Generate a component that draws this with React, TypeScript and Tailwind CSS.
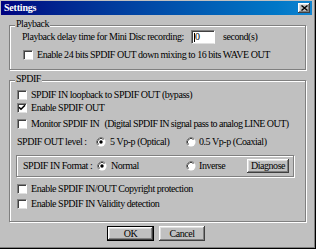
import React from "react";

const txt = "font-['Liberation_Serif',serif] text-[10px] leading-[12px] tracking-[-0.45px] text-black whitespace-nowrap";

function Check({ checked = false }: { checked?: boolean }) {
  return (
    <span className="w-[10px] h-[10px] shrink-0 bg-white border border-t-[#808080] border-l-[#808080] border-r-white border-b-[#dfdfdf] shadow-[inset_1px_1px_0_#404040] flex items-center justify-center">
      {checked && (
        <svg width="8" height="8" viewBox="0 0 8 8">
          <path d="M1 3.2 L3 5.2 L7 1.2" stroke="#000" strokeWidth="1.6" fill="none" />
        </svg>
      )}
    </span>
  );
}

function Radio({ checked = false }: { checked?: boolean }) {
  return (
    <svg width="10" height="10" viewBox="0 0 10 10" className="shrink-0">
      <circle cx="5" cy="5" r="4.5" fill="#fff" />
      <path d="M1.82 8.18 A4.5 4.5 0 0 1 8.18 1.82" stroke="#808080" fill="none" />
      <path d="M2.5 7.5 A3.5 3.5 0 0 1 7.5 2.5" stroke="#404040" fill="none" />
      {checked && <circle cx="5" cy="5" r="1.7" fill="#000" />}
    </svg>
  );
}

function CheckRow({ label, extra, checked, className = "" }: { label: string; extra?: string; checked?: boolean; className?: string }) {
  return (
    <div className={`flex items-center h-[12px] gap-[4px] ${className}`}>
      <Check checked={checked} />
      <span className={txt}>{label}</span>
      {extra && <span className={`ml-[1px] tracking-[-0.55px] ${txt}`}>{extra}</span>}
    </div>
  );
}

const bevel =
  "bg-[#c0c0c0] shadow-[inset_-1px_-1px_0_#404040,inset_1px_1px_0_#fff,inset_-2px_-2px_0_#808080,inset_2px_2px_0_#dfdfdf]";
const etched = "border border-[#808080] shadow-[inset_1px_1px_0_#fff,1px_1px_0_#fff]";

export default function App() {
  return (
    <div className="w-[316px] h-[249px] bg-[#c0c0c0] flex flex-col pl-[1px] pr-[4px] pt-[1px] shadow-[inset_-1px_-1px_0_#000,inset_-2px_-2px_0_#808080]">
      {/* Title bar */}
      <div className="h-[14px] flex items-center justify-between bg-linear-to-r from-[#000080] to-[#1084d0] pl-[3px] pr-[2px]">
        <span className="font-['Liberation_Serif',serif] text-[10px] leading-[12px] tracking-[-0.2px] font-bold text-white">Settings</span>
        <span className={`w-[12px] h-[10px] flex items-center justify-center ${bevel}`}>
          <svg width="7" height="6" viewBox="0 0 7 6">
            <path d="M0.5 0.5 L6.5 5.5 M6.5 0.5 L0.5 5.5" stroke="#000" strokeWidth="1.4" />
          </svg>
        </span>
      </div>

      <div className="pl-[8px] flex flex-col">
        {/* Playback */}
        <div className={`relative mt-[10px] w-[297px] h-[45px] ${etched} pl-[12px] pt-[4px]`}>
          <span className={`absolute left-[5px] -top-[8px] px-[1px] bg-[#c0c0c0] ${txt}`}>Playback</span>
          <div className="flex items-center h-[14px]">
            <span className={`w-[169px] ${txt}`}>Playback delay time for Mini Disc recording:</span>
            <span className="w-[24px] h-[14px] bg-white border border-t-[#808080] border-l-[#808080] border-r-white border-b-[#dfdfdf] shadow-[inset_1px_1px_0_#404040] flex items-center pl-[2px]">
              <span className="w-[1px] h-[9px] bg-black" />
              <span className={txt}>0</span>
            </span>
            <span className={`ml-[8px] ${txt}`}>second(s)</span>
          </div>
          <CheckRow className="mt-[5px] pl-[1px]" label="Enable 24 bits SPDIF OUT down mixing to 16 bits WAVE OUT" />
        </div>

        {/* SPDIF */}
        <div className={`relative mt-[10px] w-[297px] h-[142px] ${etched} pl-[7px] pt-[8px]`}>
          <span className={`absolute left-[5px] -top-[8px] px-[1px] bg-[#c0c0c0] ${txt}`}>SPDIF</span>
          <CheckRow label="SPDIF IN loopback to SPDIF OUT (bypass)" />
          <CheckRow className="mt-[1px]" checked label="Enable SPDIF OUT" />
          <CheckRow className="mt-[4px]" label="Monitor SPDIF IN" extra="(Digital SPDIF IN signal pass to analog LINE OUT)" />

          <div className="flex items-center h-[12px] mt-[6px]">
            <span className={`w-[79px] ${txt}`}>SPDIF OUT level :</span>
            <div className="w-[90px] flex items-center gap-[4px]">
              <Radio checked />
              <span className={txt}>5 Vp-p (Optical)</span>
            </div>
            <div className="flex items-center gap-[3px]">
              <Radio />
              <span className={txt}>0.5 Vp-p (Coaxial)</span>
            </div>
          </div>

          <div className={`-ml-[1px] mt-[7px] w-[278px] h-[22px] ${etched} flex items-center pl-[6px] pr-[4px]`}>
            <span className={`w-[74px] ${txt}`}>SPDIF IN Format :</span>
            <div className="w-[89px] flex items-center gap-[4px]">
              <Radio checked />
              <span className={txt}>Normal</span>
            </div>
            <div className="flex items-center gap-[3px]">
              <Radio />
              <span className={txt}>Inverse</span>
            </div>
            <span className={`ml-auto w-[42px] h-[14px] flex items-center justify-center ${bevel} ${txt}`}>Diagnose</span>
          </div>

          <CheckRow className="mt-[6px]" label="Enable SPDIF IN/OUT Copyright protection" />
          <CheckRow className="mt-[3px]" label="Enable SPDIF IN Validity detection" />
        </div>

        {/* Buttons */}
        <div className="flex gap-[5px] mt-[4px] pl-[98px]">
          <span className="w-[47px] h-[15px] border border-black">
            <span className={`w-full h-full flex items-center justify-center ${bevel} ${txt}`}>OK</span>
          </span>
          <span className={`w-[46px] h-[15px] flex items-center justify-center ${bevel} ${txt}`}>Cancel</span>
        </div>
      </div>
    </div>
  );
}
